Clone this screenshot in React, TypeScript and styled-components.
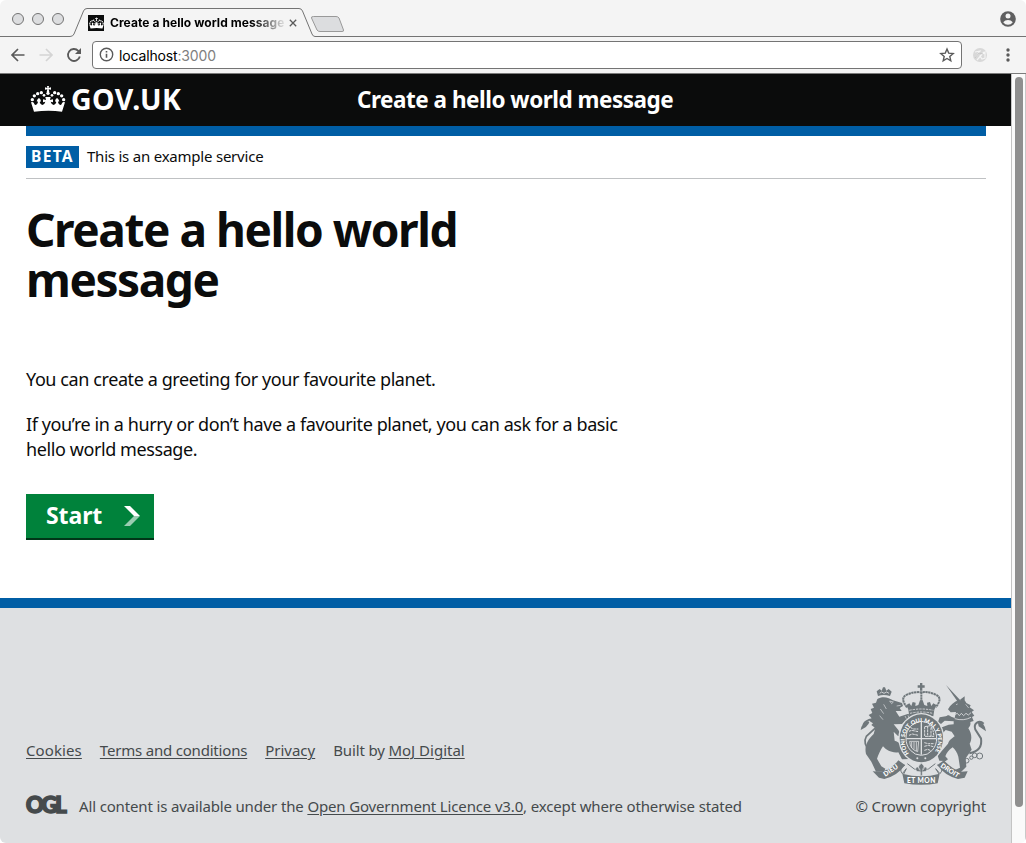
import React from "react";
import styled, { createGlobalStyle } from "styled-components";

const Global = createGlobalStyle`
  * { box-sizing: border-box; }
  html, body { margin: 0; padding: 0; background: #fff; overflow: hidden; }
`;

const transport = `"Noto Sans", "Open Sans", sans-serif`;
const system = `Inter, "Liberation Sans", sans-serif`;

const Window = styled.div`
  width: 1026px;
  height: 843px;
  display: flex;
  flex-direction: column;
  overflow: hidden;
  border-radius: 6px;
  background: #fff;
`;

const TabStrip = styled.div`
  height: 37px;
  flex: none;
  display: flex;
  position: relative;
  background: #f4f4f4;
  padding-left: 12px;
`;

const Outline = styled.svg`
  position: absolute;
  left: 0;
  top: 0;
`;

const Lights = styled.div`
  display: flex;
  gap: 8px;
  padding-top: 13px;
  width: 76px;
`;

const Light = styled.span`
  width: 12px;
  height: 12px;
  border-radius: 50%;
  background: #dcdddf;
  border: 1px solid #737373;
`;

const Tab = styled.div`
  position: relative;
  display: flex;
  align-items: center;
  height: 16px;
  margin-top: 15px;
`;

const Favicon = styled.span`
  display: flex;
  align-items: center;
  justify-content: center;
  width: 16px;
  height: 16px;
  background: #0b0c0c;
`;

const TabTitle = styled.span`
  width: 174px;
  margin-left: 6px;
  overflow: hidden;
  white-space: nowrap;
  font: 700 12px/16px ${system};
  letter-spacing: 0.07px;
  color: #000;
  mask-image: linear-gradient(to right, #000 142px, transparent 177px);
`;

const TabClose = styled.svg`
  margin-left: 5px;
`;

const Profile = styled.svg`
  margin: 11px 10px 0 auto;
`;

const Toolbar = styled.div`
  height: 37px;
  flex: none;
  display: flex;
  align-items: center;
  background: #f4f4f4;
  border-bottom: 1px solid #7b7b7b;
  padding: 0 9px 1px 10px;
`;

const NavIcons = styled.div`
  display: flex;
  gap: 12px;
  width: 82px;
`;

const AddressBar = styled.div`
  display: flex;
  align-items: center;
  width: 870px;
  height: 28px;
  border: 1px solid #747474;
  border-radius: 4px;
  background: #fff;
  padding: 0 6px;
`;

const Url = styled.span`
  margin-left: 5px;
  padding-top: 2px;
  font: 400 14px/20px ${system};
  letter-spacing: -0.15px;
  color: #000;
  flex: 1;
  span { color: #808080; }
`;

const ToolbarExtras = styled.div`
  display: flex;
  align-items: center;
  gap: 12px;
  margin-left: 10px;
`;

const Viewport = styled.div`
  flex: 1;
  display: flex;
  min-height: 0;
`;

const Page = styled.div`
  width: 1011px;
  display: flex;
  flex-direction: column;
  font-family: ${transport};
  color: #0b0c0c;
`;

const ScrollTrack = styled.div`
  width: 15px;
  background: #fafafa;
  border-left: 1px solid #c4c4c4;
  border-right: 1px solid #c8c8c8;
  padding: 3px 0 0 3px;
`;

const ScrollThumb = styled.div`
  width: 8px;
  height: 730px;
  border-radius: 4px;
  background: #8f8f8f;
`;

const Header = styled.header`
  display: flex;
  align-items: center;
  height: 52px;
  flex: none;
  padding: 0 0 2px 30px;
  background: #0b0c0c;
  color: #fff;
  white-space: nowrap;
`;

const LogoText = styled.span`
  width: 286px;
  margin-left: 5px;
  font-size: 28.5px;
  line-height: 50px;
  font-weight: 700;
  letter-spacing: 0.4px;
`;

const ServiceName = styled.span`
  padding-top: 1px;
  font-size: 22.5px;
  line-height: 50px;
  font-weight: 700;
  letter-spacing: -0.49px;
`;

const Container = styled.div`
  width: 960px;
  margin-left: 26px;
`;

const BlueBar = styled.div`
  height: 10px;
  flex: none;
  background: #005ea5;
`;

const PhaseBanner = styled.div`
  display: flex;
  align-items: center;
  height: 43px;
  border-bottom: 1px solid #bfc1c3;
  font-size: 15px;
  letter-spacing: -0.22px;
`;

const PhaseText = styled.span`
  padding-bottom: 2px;
`;

const PhaseTag = styled.strong`
  width: 53px;
  height: 22px;
  margin-right: 8px;
  background: #005ea5;
  color: #fff;
  text-align: center;
  font-size: 15.5px;
  line-height: 21px;
  letter-spacing: 1.3px;
`;

const Title = styled.h1`
  width: 500px;
  margin: 25px 0 63px;
  font-size: 46px;
  line-height: 50px;
  font-weight: 700;
  letter-spacing: -1.45px;
`;

const Paragraph = styled.p`
  width: 620px;
  margin: 0 0 20px;
  font-size: 18px;
  line-height: 25px;
  letter-spacing: -0.41px;
  white-space: nowrap;
`;

const StartButton = styled.button`
  display: flex;
  align-items: center;
  justify-content: space-between;
  width: 128px;
  height: 46px;
  margin-top: 32px;
  padding: 0 14px 3px 20px;
  border: 0;
  background: #00823b;
  box-shadow: inset 0 -2px #003618;
  color: #fff;
  font: 700 23px/43px ${transport};
  letter-spacing: -0.1px;
`;

const Footer = styled.footer`
  flex: 1;
  display: flex;
  justify-content: space-between;
  margin-top: 58px;
  padding: 75px 25px 0 26px;
  border-top: 10px solid #005ea5;
  background: #dee0e2;
  color: #454a4c;
  font-size: 15px;
  line-height: 20px;
  letter-spacing: -0.15px;
  white-space: nowrap;
`;

const FooterMeta = styled.div`
  padding-top: 57px;
`;

const FooterLinks = styled.div`
  display: flex;
  gap: 18px;
`;

const Licence = styled.div`
  display: flex;
  margin-top: 36px;
`;

const Link = styled.a<{ $tracking?: number }>`
  color: inherit;
  letter-spacing: ${(p) => (p.$tracking === undefined ? "inherit" : `${p.$tracking}px`)};
  text-decoration: underline;
  text-decoration-thickness: 1px;
  text-underline-offset: 2px;
`;

const Ogl = styled.span`
  width: 53px;
  font: 900 22px/17px Lato, sans-serif;
  letter-spacing: -2.3px;
  -webkit-text-stroke: 1.6px #454a4c;
`;

const Copyright = styled.div`
  display: flex;
  flex-direction: column;
  align-items: flex-end;
  gap: 11px;
  letter-spacing: -0.1px;
`;

const Crown = ({ width, height }: { width: number; height: number }) => (
  <svg width={width} height={height} viewBox="31 30 106 78" fill="#fff">
    <path d="M81 30h6l-1 6 7-2v7l-7-1 2 8h-8l2-8-7 1v-7l7 2z" />
    <circle cx="84" cy="52" r="5" />
    {[[37, 71], [43, 59.5], [53, 53], [64, 50], [72, 58]].map(([x, y], i) => (
      <g key={i}>
        <circle cx={x} cy={y} r={i === 4 ? 4 : 5} />
        <circle cx={168 - x} cy={y} r={i === 4 ? 4 : 5} />
      </g>
    ))}
    <path d="M33 79q6-3 8 1l4 7q8-1 9-10l-4-1q3-9 7-10 5 3 6 10l-4 2q2 8 8 9 7-2 9-10l-7 2v-9l9 2-2-9h16l-2 9 9-2v9l-7-2q2 8 9 10 6-1 8-9l-4-2q1-7 6-10 4 1 7 10l-4 1q1 9 9 10l4-7q2-4 8-1l-9 28q-39-5-84 0z" />
  </svg>
);

const Arms = () => (
  <svg width="126" height="102" viewBox="33 24 378 306" fill="#6f777b">
    {/* crown */}
    <path d="M213 24h7v7h7v7h-7v9h-7v-9h-7v-7h7z" />
    <path d="M174 97Q151 69 174 59q22-10 43-7 22-3 43 7 23 10 0 38M217 50v40" fill="none" stroke="#6f777b" strokeWidth="6" strokeDasharray="7 1.500" />
    <path d="M178 104l-6-14 9-5 6 8 4-12 9 2-1 10 9-3 5-14h8l5 14 9 3-1-10 9-2 4 12 6-8 9 5-6 14-3 20q-36-8-72 0z" />
    <path d="M181 106q36-8 72 0M183 115q34-8 68 0" fill="none" stroke="#dee0e2" strokeWidth="2.500" strokeDasharray="7 3" />
    {/* lion */}
    <path d="M87 63l-4-14 9-7 6 5 4-10h6l4 10 7-5 9 8-5 13q-19-6-36 0z" />
    <path d="M92 55l6-4 7 4 8-4 7 4" fill="none" stroke="#dee0e2" strokeWidth="2.500" />
    <path d="M85 72C100 62 120 67 132 76l27 8 3 9-10 6 6 9h-18l11 17 27-9 8 10-2 16-17-3-8 8-25 1 14 17 12 21-14-4-12-12 3 27c20 6 27 18 25 36l26 11-2 8-27 1-11-21c-20 3-38-8-46-18-7 10-14 26-18 37l13 23 12 7-4 9h-24l-14-30-16-23c-6-24 6-44 23-60l5-18-12-9 5-5-12-8 8-7-9-10 11-6-5-12 10-4-6-12 12-3z" />
    <path d="M122 78l11 3-5 5zM143 93l12-2M104 88l8 14M94 102l10 14M92 122l10 12M168 123l4 8M177 121l3 8" fill="none" stroke="#dee0e2" strokeWidth="2" />
    <path d="M66 232Q39 206 52 184l25-23c16-20-5-34-20-25q-11 4-14 14" fill="none" stroke="#6f777b" strokeWidth="5" />
    <path d="M35 165q2-20 22-27l4 4q-5 14-26 23z" />
    {/* unicorn */}
    <path d="M291 30l43 46-7 6zM333 74l14-10v16z" />
    <path d="M332 76c12-5 17 2 20 8l13 7-3 6 13 9-7 5 8 11-7 4 5 12-10 3c2 11-3 14-6 19 10 16 12 31 4 46l6 18-18 26 2 25-16 16-22 2 2-7 17-8-5-33c-3-12-10-22-17-28-12 7-18 17-22 27l8 9-7 5-19-1-5-15 31-36c5-13 14-17 20-22l-9-14-18-5-14 15-10-6 9-16 24-9 15-1v-9l-27-2-11 10-9-6 5-14 27-5 18 7 4-18-16 1-8-9c7-13 18-23 33-28z" />
    <path d="M316 119l9-4 6 7 6-7 7 7 7-7 7 5 8-7M317 131q27 8 49-4" fill="none" stroke="#dee0e2" strokeWidth="2.500" />
    <path d="M321 89l5-2M350 88l9 11" stroke="#dee0e2" strokeWidth="2" />
    <path d="M361 235q41-8 35-45l-17-26c-7-20 12-30 25-18" fill="none" stroke="#6f777b" strokeWidth="6" />
    <path d="M386 140q22 2 25 29l-22-15z" />
    <g fill="none" stroke="#6f777b" strokeWidth="3">
      <circle cx="298" cy="128" r="6" />
      <circle cx="340" cy="243" r="6" /><circle cx="353" cy="257" r="7" /><circle cx="367" cy="248" r="5" />
      <circle cx="377" cy="241" r="7" /><circle cx="392" cy="243" r="9" />
    </g>
    {/* garter and shield */}
    <ellipse cx="217" cy="190" rx="69" ry="76" fill="#dee0e2" />
    <ellipse cx="217" cy="190" rx="65" ry="72" />
    <ellipse cx="217" cy="190" rx="46" ry="51" stroke="#dee0e2" strokeWidth="3" />
    <path id="motto" d="M180 235A50 56 0 1 1 254 235" fill="none" />
    <text fill="#fff" fontFamily="Lato, sans-serif" fontWeight="900" fontSize="17">
      <textPath href="#motto" textLength="240">HONI SOIT QUI MAL Y PENSE</textPath>
    </text>
    <path d="M217 141v98M172 191h90" stroke="#dee0e2" strokeWidth="4" />
    <path d="M184 157l8 5h16M180 169l8-3 20 4M180 181l10-4 18 4M226 203l12 3h18M226 214l12-3 15 4M226 226l10-3 10 4M227 155v29h28l-3-18-8-14z M236 153v32M246 158v27" fill="none" stroke="#dee0e2" strokeWidth="3" strokeDasharray="8 2" />
    <path d="M182 199q1 25 24 31l3-31zM188 201v18M195 201v23M202 201v27" fill="none" stroke="#dee0e2" strokeWidth="2.500" />
    <circle cx="205" cy="250" r="3" fill="#dee0e2" /><circle cx="229" cy="250" r="3" fill="#dee0e2" />
    {/* motto scroll */}
    <path d="M71 289l26 1q30-7 51-34l20 14q-22 32-62 42l-16-4zM356 289l-20 1q-27-7-51-34l-20 14q22 32 62 42l20-4zM160 296q57 15 112 0l-6 29q-49 9-100 0z" />
    <path d="M168 270q-21 10-8 26l12-15M265 270q23 10 8 26l-13-15M175 266q42 43 84 0M172 281l-8 16M260 281l10 16" fill="none" stroke="#6f777b" strokeWidth="3" />
    <path d="M217 265c11 8 10 16 4 21 0-12 13-14 13-3 0 8-10 7-14 7v12h-6v-12c-4 0-14 1-14-7 0-11 13-9 13 3-6-5-7-13 4-21z" stroke="#dee0e2" strokeWidth="2" />
    <g fill="#fff" fontFamily="Lato, sans-serif" fontWeight="900" fontSize="20">
      <text transform="translate(109 305) rotate(-34)" textLength="48">DIEU</text>
      <text x="174" y="324" textLength="85">ET MON</text>
      <text transform="translate(273 275) rotate(33)" textLength="62">DROIT</text>
    </g>
  </svg>
);

export default function App() {
  return (
    <>
      <Global />
      <Window>
        <TabStrip>
          <Outline width="1026" height="37" fill="none" stroke="#737373">
            <path d="M0 36.5H70Q73 36.500 74 34L83.500 11Q84.500 8.500 87 8.500H299Q301.500 8.500 302.500 11L312 34Q313 36.500 315 36.500H1026" fill="none" />
            <path d="M313.500 16.500H336Q338 16.500 339 18L343.500 30Q344 31.500 342 31.500H320Q318 31.500 317 30L311.500 18Q311 16.500 313.500 16.500Z" fill="#dcdddf" stroke="#999" />
          </Outline>
          <Lights><Light /><Light /><Light /></Lights>
          <Tab>
            <Favicon><Crown width={15} height={12} /></Favicon>
            <TabTitle>Create a hello world message</TabTitle>
            <TabClose width="8" height="8" viewBox="0 0 8 8" stroke="#5a5a5a" strokeWidth="1.3">
              <path d="M.8.8l6.400 6.400M7.200.8L.8 7.200" />
            </TabClose>
          </Tab>
          <Profile width="16" height="16" viewBox="0 0 16 16">
            <circle cx="8" cy="8" r="7.800" fill="#5f5f60" />
            <circle cx="8" cy="5" r="2.500" fill="#f4f4f4" />
            <path d="M3.200 11.200Q5 8.900 8 8.900t4.800 2.300Q11 13.700 8 13.700t-4.800-2.500z" fill="#f4f4f4" />
          </Profile>
        </TabStrip>
        <Toolbar>
          <NavIcons>
            <svg width="16" height="16" fill="none" stroke="#5a5a5a" strokeWidth="1.700"><path d="M14.500 8H2.500M8 2L2 8l6 6" /></svg>
            <svg width="16" height="16" fill="none" stroke="#d4d4d4" strokeWidth="1.700"><path d="M1.500 8h12M8 2l6 6-6 6" /></svg>
            <svg width="16" height="16" fill="none" stroke="#5a5a5a" strokeWidth="1.800"><path d="M13.800 9.500A6 6 0 1 1 12.300 3.800L13.500 5" /><path d="M15 1v6H9z" fill="#5a5a5a" stroke="none" /></svg>
          </NavIcons>
          <AddressBar>
            <svg width="15" height="15" fill="none" stroke="#5a5a5a" strokeWidth="1.400"><circle cx="7.500" cy="7.500" r="6.200" /><path d="M7.500 6.700v4M7.500 4v1.500" strokeWidth="1.600" /></svg>
            <Url>localhost<span>:3000</span></Url>
            <svg width="16" height="16" fill="none" stroke="#5a5a5a" strokeWidth="1.400"><path d="M8 2l1.700 4.100 4.500.4-3.400 2.900 1 4.400L8 11.500l-3.800 2.300 1-4.400L1.800 6.500l4.500-.4z" /></svg>
          </AddressBar>
          <ToolbarExtras>
            <svg width="16" height="16" fill="none"><circle cx="8" cy="8" r="7" fill="#d8d8d8" /><path d="M3 5l5-1-4 6M5 13l7-8M8 9l5-4v6l-3 1z" stroke="#f4f4f4" strokeWidth="1.200" /><path d="M3 11l4-5 4 1" stroke="#c8c8c8" /></svg>
            <svg width="16" height="16" fill="#5a5a5a"><circle cx="8" cy="3" r="1.700" /><circle cx="8" cy="8" r="1.700" /><circle cx="8" cy="13" r="1.700" /></svg>
          </ToolbarExtras>
        </Toolbar>
        <Viewport>
          <Page>
            <Header>
              <Crown width={36} height={26} />
              <LogoText>GOV.UK</LogoText>
              <ServiceName>Create a hello world message</ServiceName>
            </Header>
            <Container>
              <BlueBar />
              <PhaseBanner><PhaseTag>BETA</PhaseTag><PhaseText>This is an example service</PhaseText></PhaseBanner>
              <Title>Create a hello world message</Title>
              <Paragraph>You can create a greeting for your favourite planet.</Paragraph>
              <Paragraph>If you’re in a hurry or don’t have a favourite planet, you can ask for a basic<br />hello world message.</Paragraph>
              <StartButton>
                Start
                <svg width="16" height="20"><path d="M0 0h6l10 10h-6z" fill="#fff" /><path d="M0 20h6l10-10h-6z" fill="#99cdb1" /></svg>
              </StartButton>
            </Container>
            <Footer>
              <FooterMeta>
                <FooterLinks>
                  <Link $tracking={0.1}>Cookies</Link>
                  <Link $tracking={-0.2}>Terms and conditions</Link>
                  <Link $tracking={0}>Privacy</Link>
                  <span>Built by <Link $tracking={0}>MoJ Digital</Link></span>
                </FooterLinks>
                <Licence>
                  <Ogl>OGL</Ogl>
                  <span>All content is available under the <Link>Open Government Licence v3.0</Link>, except where otherwise stated</span>
                </Licence>
              </FooterMeta>
              <Copyright>
                <Arms />
                <span>© Crown copyright</span>
              </Copyright>
            </Footer>
          </Page>
          <ScrollTrack><ScrollThumb /></ScrollTrack>
        </Viewport>
      </Window>
    </>
  );
}
